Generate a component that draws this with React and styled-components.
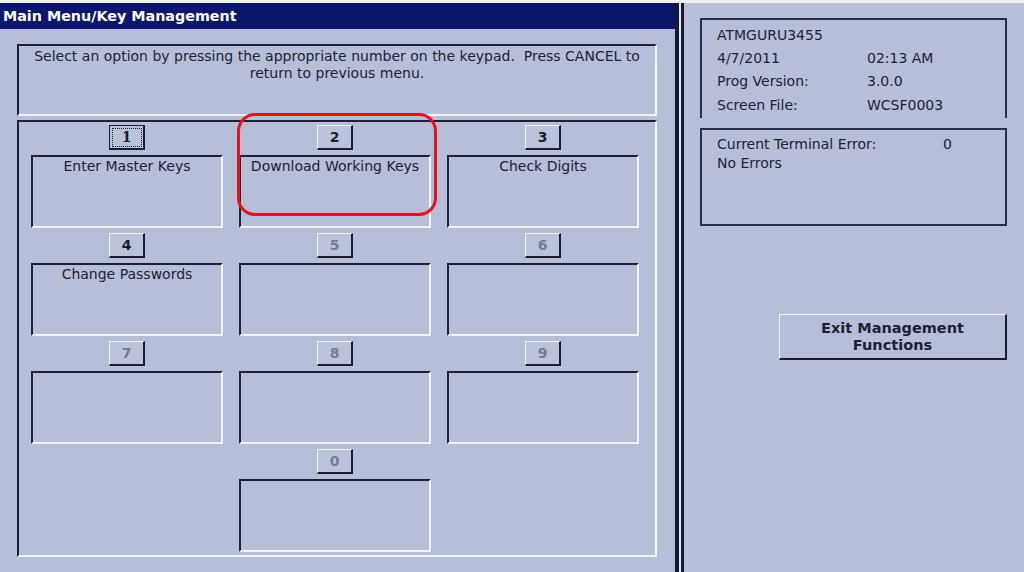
import React from "react";
import styled, { createGlobalStyle } from "styled-components";

const GlobalStyle = createGlobalStyle`
  html, body {
    margin: 0;
    padding: 0;
    background: #b7bfd8;
  }
  body {
    font-family: "DejaVu Sans", "Liberation Sans", sans-serif;
    color: #1d2133;
  }
`;

const Screen = styled.div`
  position: relative;
  width: 1024px;
  height: 572px;
  display: flex;
  flex-direction: row;
  background: #b7bfd8;
  border-top: 3px solid #eef0f6;
  box-sizing: border-box;
  overflow: hidden;
`;

const LeftPanel = styled.div`
  width: 679px;
  display: flex;
  flex-direction: column;
  border-right: 4px solid #161a30;
  box-sizing: border-box;
`;

const TitleBar = styled.div`
  height: 26px;
  background: #0b176b;
  color: #ffffff;
  font-weight: 700;
  font-size: 14.3px;
  line-height: 27px;
  padding-left: 3px;
`;

const Body = styled.div`
  flex: 1;
  display: flex;
  flex-direction: column;
  gap: 4px;
  padding: 15px 0 0 17px;
`;

const Sunken = styled.div`
  box-sizing: border-box;
  width: 640px;
  border-top: 2px solid #1c2036;
  border-left: 2px solid #1c2036;
  border-bottom: 2px solid #f2f4fa;
  border-right: 2px solid #f2f4fa;
`;

const Instructions = styled(Sunken)`
  height: 72px;
  padding-top: 2px;
  font-size: 14px;
  line-height: 17px;
  text-align: center;
`;

const Keypad = styled(Sunken)`
  height: 437px;
  display: grid;
  grid-template-columns: repeat(3, 192px);
  grid-auto-rows: 103px;
  column-gap: 16px;
  row-gap: 5px;
  padding: 3px 0 0 12px;
`;

const KeyCell = styled.div`
  display: flex;
  flex-direction: column;
  align-items: center;
  gap: 5px;
  grid-column: ${p => p.$col || "auto"};
`;

const NumButton = styled.div`
  box-sizing: border-box;
  width: 36px;
  height: 25px;
  display: flex;
  align-items: center;
  justify-content: center;
  font-weight: 700;
  font-size: 14px;
  color: ${p => (p.$enabled ? "#1a1d2e" : "#737b96")};
  background: #bbc3db;
  border-top: 1px solid ${p => (p.$focused ? "#1a1d2e" : "#eef1f8")};
  border-left: 1px solid ${p => (p.$focused ? "#1a1d2e" : "#eef1f8")};
  border-bottom: 2px solid #1a1d2e;
  border-right: 2px solid #1a1d2e;
`;

const FocusRing = styled.span`
  display: flex;
  align-items: center;
  justify-content: center;
  width: 28px;
  height: 17px;
  border: 1px dotted #1a1d2e;
  font-family: "DejaVu Serif", "Liberation Serif", serif;
`;

const KeyBox = styled.div`
  box-sizing: border-box;
  width: 192px;
  height: 73px;
  border-top: 2px solid #1c2036;
  border-left: 2px solid #1c2036;
  border-bottom: 2px solid #f2f4fa;
  border-right: 2px solid #f2f4fa;
  padding-top: 1px;
  font-size: 14px;
  line-height: 17px;
  text-align: center;
`;

const Separator = styled.div`
  width: 2px;
  background: #e6e9f2;
`;

const RightPanel = styled.div`
  flex: 1;
  border-left: 3px solid #161a30;
  display: flex;
  flex-direction: column;
  padding: 15px 0 0 16px;
  font-size: 14px;
`;

const InfoBox = styled.div`
  box-sizing: border-box;
  width: 307px;
  height: 100px;
  border: 2px solid #2a2f48;
  border-bottom: none;
  padding: 3px 0 0 15px;
  display: grid;
  grid-template-columns: 150px 1fr;
  grid-auto-rows: 23.4px;
  align-items: center;
`;

const ErrorBox = styled.div`
  box-sizing: border-box;
  width: 307px;
  height: 98px;
  margin-top: 10px;
  border: 2px solid #2a2f48;
  padding: 4px 0 0 15px;
  display: grid;
  grid-template-columns: 226px 1fr;
  grid-auto-rows: 19px;
  align-items: center;
`;

const Wide = styled.div`
  grid-column: 1 / -1;
`;

const ExitButton = styled.div`
  box-sizing: border-box;
  align-self: flex-start;
  margin: 88px 0 0 79px;
  width: 228px;
  height: 46px;
  display: flex;
  align-items: center;
  justify-content: center;
  text-align: center;
  font-weight: 700;
  font-size: 14.5px;
  line-height: 17px;
  border-top: 1px solid #eef1f8;
  border-left: 1px solid #eef1f8;
  border-bottom: 2px solid #1a1d2e;
  border-right: 2px solid #1a1d2e;
`;

const Highlight = styled.div`
  position: absolute;
  left: 237px;
  top: 110px;
  width: 200px;
  height: 103px;
  box-sizing: border-box;
  border: 3px solid #e2141d;
  border-radius: 18px;
  pointer-events: none;
`;

const keys = [
  { n: "1", label: "Enter Master Keys", enabled: true, focused: true },
  { n: "2", label: "Download Working Keys", enabled: true },
  { n: "3", label: "Check Digits", enabled: true },
  { n: "4", label: "Change Passwords", enabled: true },
  { n: "5" },
  { n: "6" },
  { n: "7" },
  { n: "8" },
  { n: "9" },
  { n: "0", col: 2 }
];

export default function App() {
  return (
    <>
      <GlobalStyle />
      <Screen>
        <LeftPanel>
          <TitleBar>Main Menu/Key Management</TitleBar>
          <Body>
            <Instructions>
              Select an option by pressing the appropriate number on the keypad.&nbsp; Press CANCEL to
              <br />
              return to previous menu.
            </Instructions>
            <Keypad>
              {keys.map(k => (
                <KeyCell key={k.n} $col={k.col}>
                  <NumButton $enabled={k.enabled} $focused={k.focused}>
                    {k.focused ? <FocusRing>{k.n}</FocusRing> : k.n}
                  </NumButton>
                  <KeyBox>{k.label}</KeyBox>
                </KeyCell>
              ))}
            </Keypad>
          </Body>
        </LeftPanel>
        <Separator />
        <RightPanel>
          <InfoBox>
            <Wide>ATMGURU3455</Wide>
            <div>4/7/2011</div>
            <div>02:13 AM</div>
            <div>Prog Version:</div>
            <div>3.0.0</div>
            <div>Screen File:</div>
            <div>WCSF0003</div>
          </InfoBox>
          <ErrorBox>
            <div>Current Terminal Error:</div>
            <div>0</div>
            <Wide>No Errors</Wide>
          </ErrorBox>
          <ExitButton>
            Exit Management
            <br />
            Functions
          </ExitButton>
        </RightPanel>
        <Highlight />
      </Screen>
    </>
  );
}
